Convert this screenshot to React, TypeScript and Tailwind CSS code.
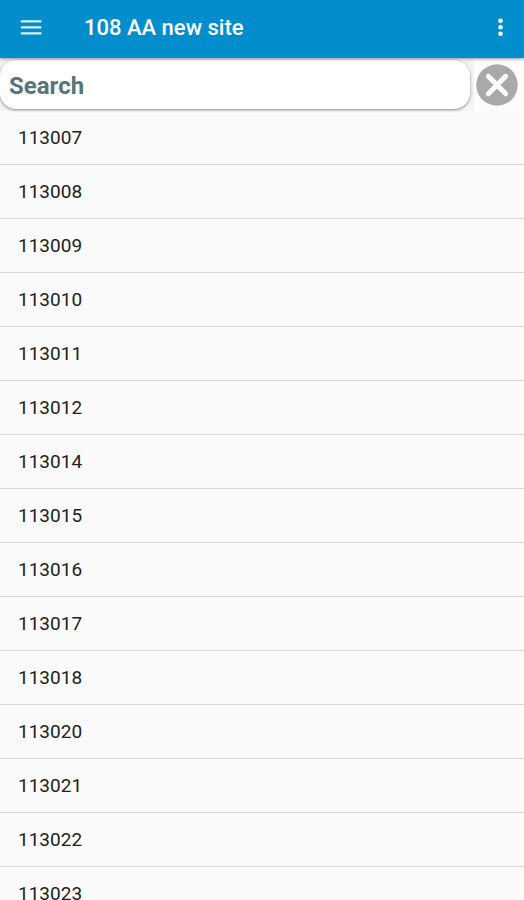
import { useState } from "react";

const sites = [
  "113007",
  "113008",
  "113009",
  "113010",
  "113011",
  "113012",
  "113014",
  "113015",
  "113016",
  "113017",
  "113018",
  "113020",
  "113021",
  "113022",
  "113023",
];

function Header() {
  return (
    <header className="relative z-10 flex h-[58px] items-center bg-[#028dcd] px-5 pb-0.5 text-white shadow-[0_1px_3px_rgba(0,0,0,0.4)]">
      <button type="button" aria-label="Open menu" className="cursor-pointer text-[#d8f1fb]">
        <svg viewBox="0 0 22 16" fill="currentColor" className="h-4 w-[22px]">
          <path d="M.8 .2h20.6v2.4H.8zM.8 6.2h20.6v2.4H.8zM.8 12.2h20.6v2.4H.8z" />
        </svg>
      </button>
      <h1 className="ml-[42px] flex-1 text-[22px] leading-7 font-medium">108 AA new site</h1>
      <button type="button" aria-label="More options" className="cursor-pointer">
        <svg viewBox="0 0 6 20" fill="currentColor" className="h-5 w-1.5">
          <circle cx="2.5" cy="2.8" r="2.3" />
          <circle cx="2.5" cy="9.2" r="2.3" />
          <circle cx="2.5" cy="15.7" r="2.3" />
        </svg>
      </button>
    </header>
  );
}

export default function App() {
  const [query, setQuery] = useState("");
  const visible = sites.filter((site) => site.includes(query.trim()));

  return (
    <div className="h-screen overflow-hidden bg-[#fafafa] font-['Roboto',sans-serif]">
      <Header />
      <div className="flex h-[53px] items-center bg-[#f4f4f4]">
        <input
          type="text"
          aria-label="Search"
          placeholder="Search"
          value={query}
          onChange={(e) => setQuery(e.target.value)}
          className="h-[49px] min-w-0 flex-1 rounded-2xl bg-white px-[9px] pt-0.5 text-2xl font-bold text-[#56757b] shadow-[0_1px_3px_rgba(0,0,0,0.45)] outline-none placeholder:text-[#56757b]"
        />
        <button
          type="button"
          aria-label="Clear search"
          onClick={() => setQuery("")}
          className="ml-1 flex h-full cursor-pointer items-center bg-[#fdfdfd] pr-1.5 pl-0.5"
        >
          <svg viewBox="0 0 42 42" className="size-[42px]">
            <circle cx="21" cy="21" r="20.7" fill="#a9a9a9" />
            <path
              d="M12.3 12.3l17.4 17.4M29.7 12.3L12.3 29.7"
              stroke="#fff"
              strokeWidth="5"
              strokeLinecap="round"
            />
          </svg>
        </button>
      </div>
      <ul>
        {visible.map((site) => (
          <li
            key={site}
            className="h-[54px] border-b border-[#d8d8d8] px-[18px] pt-[15px] text-[19px] leading-6 text-[#222]"
          >
            {site}
          </li>
        ))}
      </ul>
    </div>
  );
}
